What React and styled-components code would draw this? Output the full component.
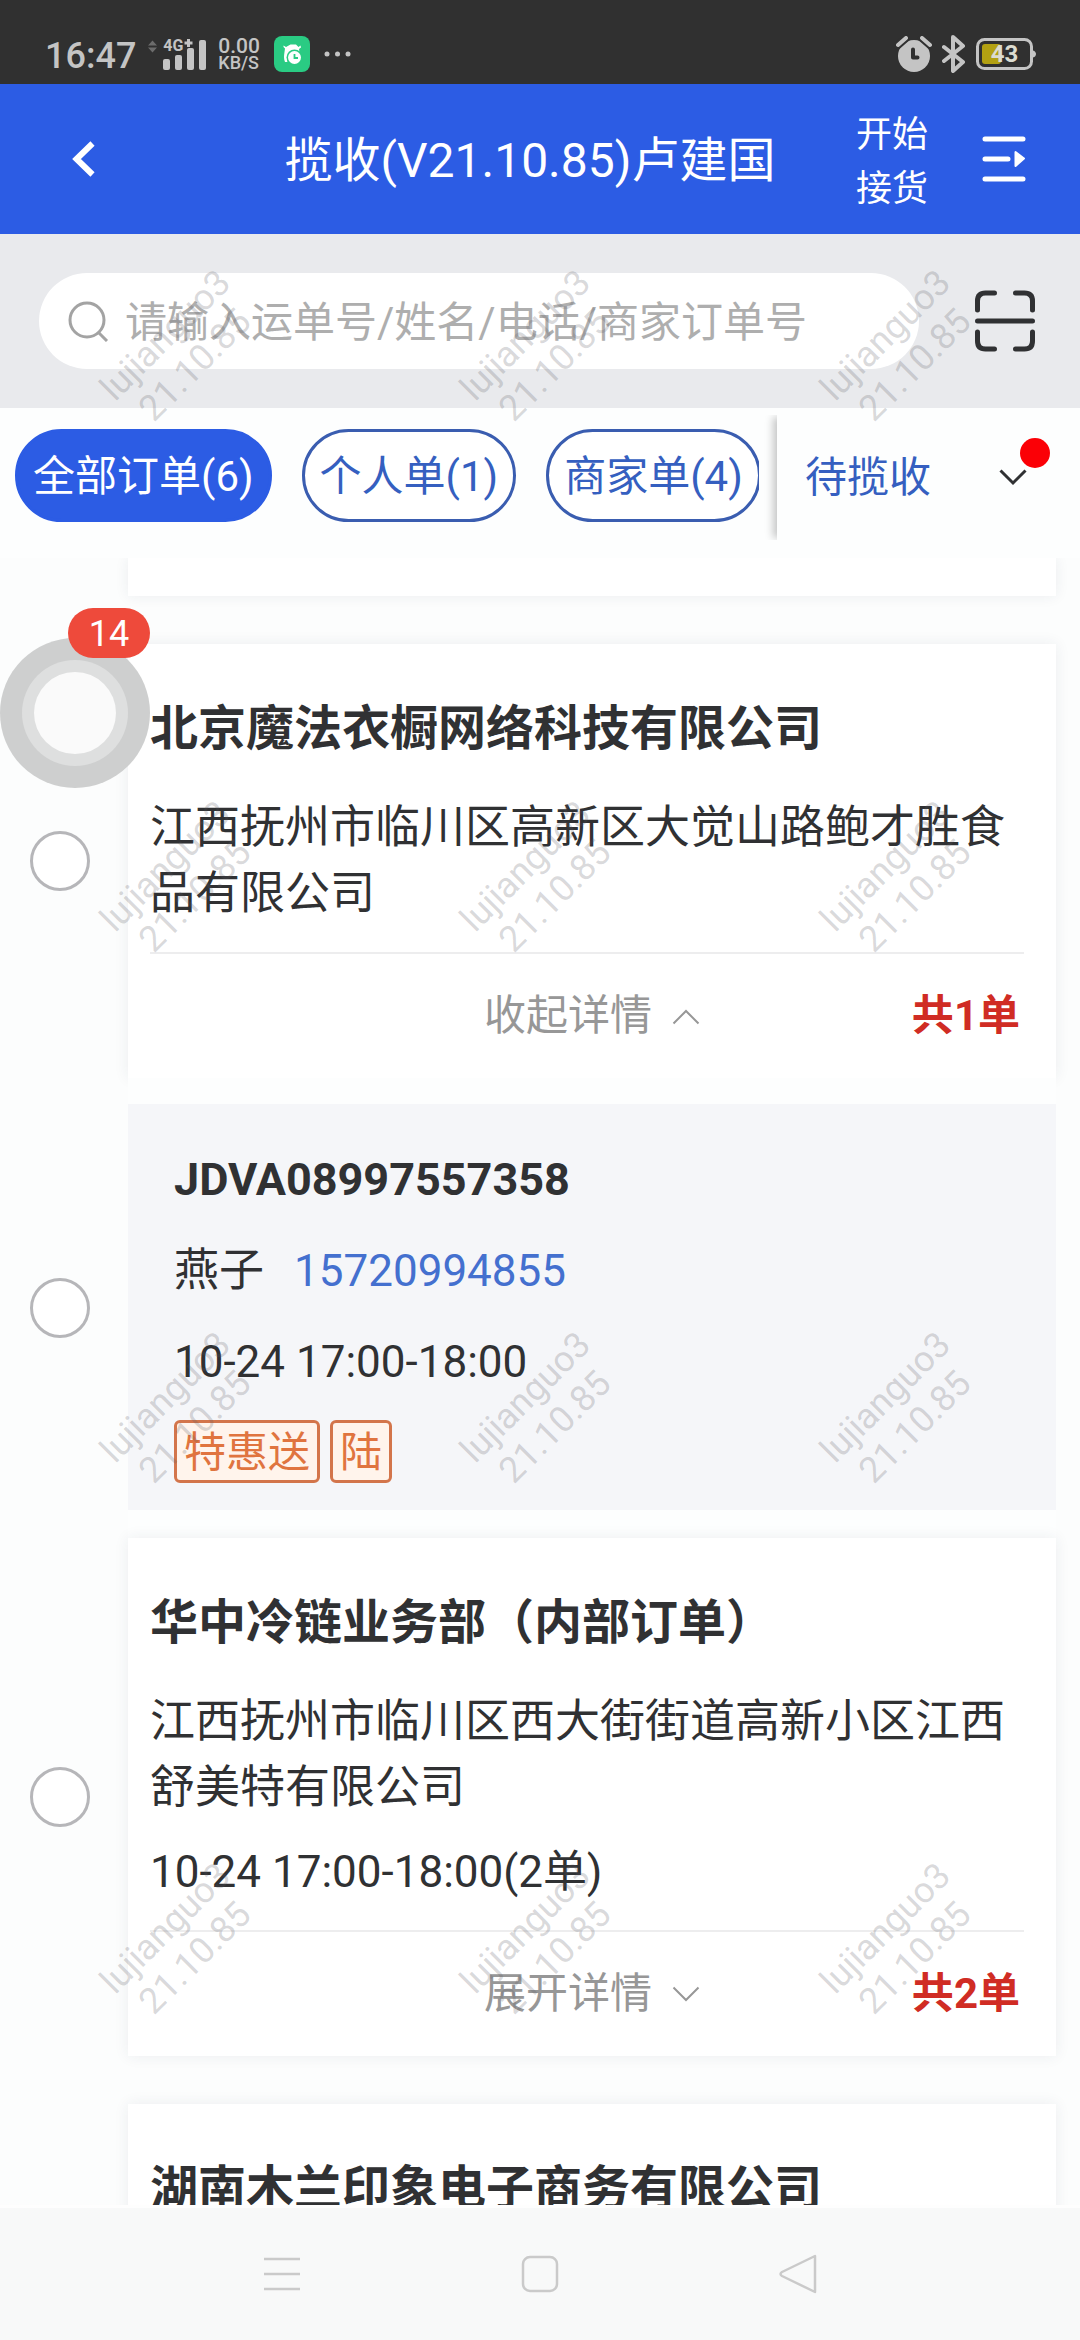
import React, { useState } from "react";
import styled, { createGlobalStyle } from "styled-components";

const blue = "#2c5ce4";
const ink = "#303133";

const GlobalStyle = createGlobalStyle`
  * { box-sizing: border-box; }
  body {
    margin: 0;
    background: #fcfdfd;
    color: ${ink};
    font-family: Roboto, "Noto Sans CJK SC", sans-serif;
  }
  button, input, select { font: inherit; color: inherit; }
  button { margin: 0; padding: 0; border: 0; background: none; cursor: pointer; }
  h1, h2, h3, p { margin: 0; }
  svg { display: block; flex: none; }
`;

const Phone = styled.div`
  display: flex;
  flex-direction: column;
  height: 100vh;
  overflow: hidden;
`;

/* ---------- system status bar ---------- */

const StatusBar = styled.div`
  display: flex;
  justify-content: space-between;
  align-items: center;
  flex: none;
  height: 84px;
  padding: 24px 44px 0 45px;
  background: #303030;
  color: #c4c4c4;
`;

const StatusGroup = styled.div`
  display: flex;
  align-items: center;
  gap: ${(p) => p.$gap}px;
`;

const Clock = styled.span`
  padding-top: 4px;
  font-size: 36px;
  line-height: 40px;
  font-weight: 500;
`;

const Signal = styled.span`
  position: relative;
  display: block;
`;

const NetworkType = styled.span`
  position: absolute;
  top: 2px;
  left: 16px;
  font-size: 16px;
  line-height: 16px;
  font-weight: 700;
`;

const Speed = styled.span`
  display: flex;
  flex-direction: column;
  font-size: 18px;
  line-height: 16px;
  font-weight: 500;
`;

const SpeedValue = styled.span`
  font-size: 21px;
  line-height: 18px;
`;

const Battery = styled.span`
  position: relative;
  display: flex;
  align-items: center;
  width: 60px;
  height: 32px;
`;

const BatteryText = styled.span`
  position: absolute;
  inset: 0 3px 0 0;
  text-align: center;
  font-size: 24px;
  line-height: 32px;
  font-weight: 700;
  color: #dcdcd0;
`;

/* ---------- app frame ---------- */

const AppArea = styled.div`
  position: relative;
  display: flex;
  flex-direction: column;
  flex: 1;
  min-height: 0;
`;

const Header = styled.header`
  display: grid;
  grid-template-columns: 204px 1fr 72px 98px;
  align-items: center;
  flex: none;
  height: 150px;
  padding-right: 54px;
  background: ${blue};
  color: #fff;
`;

const BackButton = styled.button`
  justify-self: start;
  padding: 12px 72px;
`;

const Title = styled.h1`
  padding-top: 4px;
  text-align: center;
  font-size: 48px;
  line-height: 66px;
  font-weight: 400;
  white-space: nowrap;
`;

const StartButton = styled.button`
  padding-top: 6px;
  font-size: 36px;
  line-height: 54px;
  white-space: nowrap;
`;

const MenuButton = styled.button`
  justify-self: end;
`;

const SearchBar = styled.div`
  display: flex;
  align-items: center;
  flex: none;
  gap: 55px;
  height: 174px;
  padding: 0 44px 0 39px;
  background: #e9eaed;
`;

const SearchField = styled.label`
  display: flex;
  align-items: center;
  gap: 16px;
  flex: 1;
  min-width: 0;
  height: 96px;
  padding: 0 40px 0 29px;
  border-radius: 48px;
  background: #fff;
`;

const SearchInput = styled.input`
  flex: 1;
  min-width: 0;
  height: 66px;
  padding: 2px 0 0;
  border: 0;
  outline: 0;
  background: transparent;
  font-size: 42px;
  &::placeholder { color: #aeaeae; opacity: 1; }
`;

/* ---------- filter tabs ---------- */

const FilterBar = styled.div`
  display: flex;
  flex: none;
  gap: 18px;
  height: 150px;
  background: #fdfefe;
`;

const TabScroller = styled.div`
  display: flex;
  align-items: flex-start;
  gap: 30px;
  flex: 1;
  min-width: 0;
  padding: 21px 0 0 15px;
  overflow: hidden;
`;

const Pill = styled.button`
  flex: none;
  height: 93px;
  padding: 3px 15px 0;
  border: 3px solid ${(p) => (p.$active ? blue : "#3a5db0")};
  border-radius: 48px;
  background: ${(p) => (p.$active ? blue : "#fff")};
  color: ${(p) => (p.$active ? "#fff" : "#355fc0")};
  font-size: 42px;
  line-height: 66px;
  white-space: nowrap;
`;

const StatusFilter = styled.label`
  position: relative;
  display: flex;
  align-items: center;
  justify-content: space-between;
  width: 303px;
  margin: 7px 0 18px;
  padding: 0 53px 0 28px;
  background: #fdfefe;
  box-shadow: -6px 0 8px -2px rgba(0, 0, 0, 0.22);
  clip-path: inset(0 0 0 -16px);
`;

const StatusSelect = styled.select`
  appearance: none;
  width: 132px;
  padding: 0;
  border: 0;
  outline: 0;
  background: transparent;
  color: #355fc0;
  font-size: 42px;
  line-height: 66px;
`;

const RedDot = styled.span`
  position: absolute;
  top: 23px;
  right: 30px;
  width: 30px;
  height: 30px;
  border-radius: 50%;
  background: #fb0006;
`;

/* ---------- order list ---------- */

const List = styled.main`
  flex: 1;
  min-height: 0;
  overflow: hidden;
  border-bottom: 3px solid #fefefe;
`;

const Row = styled.div`
  display: grid;
  grid-template-columns: 120px 1fr;
  gap: 8px;
  align-items: center;
  padding-right: 24px;
  margin-bottom: ${(p) => (p.$spaced ? 48 : 0)}px;
`;

const Radio = styled.input`
  appearance: none;
  justify-self: center;
  width: 60px;
  height: 60px;
  margin: 0;
  border: 3px solid #b6b6b9;
  border-radius: 50%;
  background: #fff;
  &:checked { border: 18px solid ${blue}; }
`;

const Card = styled.article`
  position: relative;
  grid-column: 2;
  min-width: 0;
  background: #fff;
  box-shadow: 0 0 14px rgba(40, 50, 80, 0.08);
`;

const CardTail = styled(Card)`
  height: 38px;
`;

const CardBody = styled.div`
  margin: 0 32px 0 22px;
  padding: 52px 0 25px;
  border-bottom: 2px solid #ededee;
`;

const Company = styled.h2`
  margin-bottom: 33px;
  font-size: 48px;
  line-height: 66px;
  font-weight: 700;
`;

const BodyText = styled.p`
  font-size: 45px;
  line-height: 66px;
`;

const TimeText = styled.p`
  font-size: 44px;
  line-height: 66px;
`;

const PickupTime = styled(TimeText)`
  margin-top: 18px;
`;

const CardFooter = styled.div`
  display: grid;
  grid-template-columns: 1fr auto 1fr;
  align-items: center;
  height: 124px;
  padding: 0 36px;
`;

const ToggleButton = styled.button`
  grid-column: 2;
  display: flex;
  align-items: center;
  gap: 20px;
  color: #979797;
  font-size: 42px;
  line-height: 66px;
`;

const Count = styled.span`
  justify-self: end;
  color: #d02c24;
  font-size: 42px;
  line-height: 66px;
  font-weight: 700;
`;

const DetailSlot = styled.div`
  position: relative;
  padding: 26px 0 28px;
  background: #fdfefe;
`;

const Detail = styled.article`
  display: flex;
  flex-direction: column;
  align-items: flex-start;
  gap: 25px;
  padding: 43px 46px 27px;
  background: #f5f6f9;
`;

const Waybill = styled.h3`
  font-size: 45px;
  line-height: 66px;
  font-weight: 700;
`;

const Contact = styled(BodyText)`
  display: flex;
  gap: 30px;
`;

const PhoneLink = styled.a`
  color: #4470cf;
  font-size: 44px;
  text-decoration: none;
`;

const Tags = styled.div`
  display: flex;
  gap: 10px;
`;

const Tag = styled.span`
  padding: 2px 7px 0;
  border: 3px solid #d3754b;
  border-radius: 6px;
  background: #fff4ec;
  color: #e0743f;
  font-size: 42px;
  line-height: 55px;
`;

/* ---------- overlays ---------- */

const FloatingBall = styled.button`
  position: absolute;
  top: 554px;
  left: 0;
  display: grid;
  place-items: center;
  width: 150px;
  height: 150px;
  border-radius: 50%;
  background: rgba(202, 203, 203, 0.92);
`;

const BallRing = styled.span`
  display: grid;
  place-items: center;
  width: 106px;
  height: 106px;
  border-radius: 50%;
  background: #dedfdf;
`;

const BallCore = styled.span`
  width: 82px;
  height: 82px;
  border-radius: 50%;
  background: #fafafa;
`;

const Badge = styled.span`
  position: absolute;
  top: -30px;
  left: 68px;
  width: 82px;
  padding-top: 2px;
  border-radius: 25px;
  background: #ee4a3b;
  color: #fff;
  font-size: 36px;
  line-height: 48px;
  text-align: center;
`;

const Watermarks = styled.div`
  position: absolute;
  inset: 0;
  display: grid;
  grid-template-columns: repeat(3, 1fr);
  grid-template-rows: repeat(4, 1fr);
  place-items: center;
  overflow: hidden;
  pointer-events: none;
`;

const Mark = styled.div`
  transform: rotate(-45deg);
  color: rgba(90, 90, 98, 0.23);
  font-size: 36px;
  line-height: 42px;
  text-align: center;
`;

/* ---------- system navigation ---------- */

const NavBar = styled.nav`
  display: grid;
  grid-template-columns: repeat(3, 258px);
  justify-content: center;
  justify-items: center;
  flex: none;
  height: 132px;
  background: #f8f9f9;
`;

/* ---------- icons ---------- */

const SignalIcon = () => (
  <svg width="60" height="36" viewBox="0 0 60 36" fill="#c4c4c4">
    <path d="M1 9.500l4.500-5 4.500 5zM1 11.500l4.500 5 4.500-5z" fill="#6c6c6c" />
    <rect x="16" y="23" width="7" height="11" rx="2" />
    <rect x="28" y="19" width="7" height="15" rx="2" />
    <rect x="40" y="12" width="7" height="22" rx="2" />
    <rect x="52" y="4" width="7" height="30" rx="2" />
    <path d="M41.500 3v8M37.500 7h8" stroke="#c4c4c4" strokeWidth="3" />
  </svg>
);

const GreenAppIcon = () => (
  <svg width="36" height="36" viewBox="0 0 36 36">
    <rect width="36" height="36" rx="8" fill="#2acb83" />
    <path
      d="M9.500 9.500L12 11l4.500-2.500h5.500L24.500 11l2-1.500.5 2-2 1.500.5 3.500h-8c-2.500 2-4 5-4 9.500h-2.500c-1.500-3-1-7-.5-10l.5-3.500-1.500-1.500z"
      fill="#fff"
    />
    <circle cx="20.500" cy="21.500" r="8" fill="#2acb83" />
    <circle cx="20.500" cy="21.500" r="6.500" fill="#fff" />
    <path d="M20.500 18v4h3.500" fill="none" stroke="#2acb83" strokeWidth="1.800" />
  </svg>
);

const DotsIcon = () => (
  <svg width="27" height="6" viewBox="0 0 27 6" fill="#c4c4c4">
    <circle cx="3" cy="3" r="2.500" />
    <circle cx="13.500" cy="3" r="2.500" />
    <circle cx="24" cy="3" r="2.500" />
  </svg>
);

const AlarmIcon = () => (
  <svg width="36" height="36" viewBox="0 0 36 36" fill="none" strokeLinecap="round">
    <circle cx="18" cy="20" r="16" fill="#c4c4c4" />
    <path d="M2 9l8-7M34 9l-8-7" stroke="#303030" strokeWidth="8" />
    <path d="M2 9l8-7M34 9l-8-7" stroke="#c4c4c4" strokeWidth="4" />
    <path d="M17 13.500v8h4.500" stroke="#303030" strokeWidth="4" strokeLinejoin="round" />
  </svg>
);

const BluetoothIcon = () => (
  <svg width="24" height="38" viewBox="0 0 24 38" fill="none" stroke="#c4c4c4" strokeWidth="4" strokeLinejoin="round" strokeLinecap="round">
    <path d="M2 12l19 15-10 9V2l10 9L2 26" />
  </svg>
);

const BatteryIcon = () => (
  <svg width="60" height="32" viewBox="0 0 60 32">
    <rect x="1.500" y="1.500" width="54" height="29" rx="7" fill="none" stroke="#c4c4c4" strokeWidth="3" />
    <path d="M57 12.500c4 1 4 6 0 7z" fill="#c4c4c4" />
    <rect x="6" y="6" width="19" height="20" rx="3" fill="#b3a112" />
  </svg>
);

const BackIcon = () => (
  <svg width="23" height="36" viewBox="0 0 23 36" fill="none" stroke="#fff" strokeWidth="6">
    <path d="M20.500 2.500L4.500 18l16 15.500" />
  </svg>
);

const MenuIcon = () => (
  <svg width="44" height="48" viewBox="0 0 44 48" fill="none" stroke="#fff" strokeWidth="5" strokeLinecap="round">
    <path d="M3 4h38M3 24h23M3 44h38" />
    <path d="M33.500 17v14l8.500-7.500z" fill="#fff" strokeWidth="2" strokeLinejoin="round" />
  </svg>
);

const SearchIcon = () => (
  <svg width="41" height="42" viewBox="0 0 41 42" fill="none" stroke="#a3a3a3" strokeWidth="3">
    <circle cx="19" cy="20" r="17" />
    <path d="M30 32l9 9" />
  </svg>
);

const ScanIcon = () => (
  <svg width="62" height="62" viewBox="0 0 62 62" fill="none" stroke="#303133" strokeWidth="5" strokeLinecap="round">
    <path d="M3.500 20v-9q0-8 8-8h9M41.500 3h9q8 0 8 8v9M58.500 42v9q0 8-8 8h-9M20.500 59h-9q-8 0-8-8v-9M3.500 31h55" />
  </svg>
);

const Chevron = ({ up, color = "#979797", weight = 2 }) => (
  <svg width="28" height="17" viewBox="0 0 28 17" fill="none" stroke={color} strokeWidth={weight}>
    <path d={up ? "M1.500 15.500L14 3l12.500 12.500" : "M1.500 1.500L14 14 26.500 1.500"} />
  </svg>
);

const RecentIcon = () => (
  <svg width="36" height="38" viewBox="0 0 36 38" stroke="#cacaca" strokeWidth="2.500">
    <path d="M0 4h36M0 19h36M0 34h36" />
  </svg>
);

const HomeIcon = () => (
  <svg width="38" height="38" viewBox="0 0 38 38" fill="none" stroke="#cacaca" strokeWidth="2.500">
    <rect x="2" y="2" width="34" height="34" rx="7" />
  </svg>
);

const TriangleIcon = () => (
  <svg width="38" height="40" viewBox="0 0 38 40" fill="none" stroke="#cacaca" strokeWidth="2.500" strokeLinejoin="round">
    <path d="M36 2v36L3 22q-3-2 0-4z" />
  </svg>
);

/* ---------- composed parts ---------- */

function OrderCard({ company, address, time, open, count, onToggle }) {
  return (
    <Row $spaced={!open}>
      <Radio type="checkbox" aria-label={company} />
      <Card>
        <CardBody>
          <Company>{company}</Company>
          <BodyText>{address}</BodyText>
          {time && <PickupTime>{time}</PickupTime>}
        </CardBody>
        <CardFooter>
          <ToggleButton type="button" onClick={onToggle}>
            {open ? "收起详情" : "展开详情"}
            <Chevron up={open} />
          </ToggleButton>
          <Count>共{count}单</Count>
        </CardFooter>
      </Card>
    </Row>
  );
}

function WaybillDetail({ code, name, phone, time, tags }) {
  return (
    <Row>
      <Radio type="checkbox" aria-label={code} />
      <DetailSlot>
        <Detail>
          <Waybill>{code}</Waybill>
          <Contact>
            {name}
            <PhoneLink href={`tel:${phone}`}>{phone}</PhoneLink>
          </Contact>
          <TimeText>{time}</TimeText>
          <Tags>
            {tags.map((t) => (
              <Tag key={t}>{t}</Tag>
            ))}
          </Tags>
        </Detail>
      </DetailSlot>
    </Row>
  );
}

const tabs = ["全部订单(6)", "个人单(1)", "商家单(4)"];

export default function App() {
  const [tab, setTab] = useState(0);
  const [open, setOpen] = useState(true);

  return (
    <Phone lang="zh-CN">
      <GlobalStyle />
      <StatusBar>
        <StatusGroup $gap={11}>
          <Clock>16:47</Clock>
          <Signal>
            <SignalIcon />
            <NetworkType>4G</NetworkType>
          </Signal>
          <StatusGroup $gap={14}>
            <Speed>
              <SpeedValue>0.00</SpeedValue>
              KB/S
            </Speed>
            <GreenAppIcon />
            <DotsIcon />
          </StatusGroup>
        </StatusGroup>
        <StatusGroup $gap={10}>
          <AlarmIcon />
          <BluetoothIcon />
          <Battery>
            <BatteryIcon />
            <BatteryText>43</BatteryText>
          </Battery>
        </StatusGroup>
      </StatusBar>

      <AppArea>
        <Header>
          <BackButton type="button" aria-label="返回">
            <BackIcon />
          </BackButton>
          <Title>揽收(V21.10.85)卢建国</Title>
          <StartButton type="button">
            开始
            <br />
            接货
          </StartButton>
          <MenuButton type="button" aria-label="菜单">
            <MenuIcon />
          </MenuButton>
        </Header>

        <SearchBar>
          <SearchField>
            <SearchIcon />
            <SearchInput type="text" aria-label="搜索" placeholder="请输入运单号/姓名/电话/商家订单号" />
          </SearchField>
          <button type="button" aria-label="扫码">
            <ScanIcon />
          </button>
        </SearchBar>

        <FilterBar>
          <TabScroller>
            {tabs.map((t, i) => (
              <Pill key={t} type="button" $active={i === tab} onClick={() => setTab(i)}>
                {t}
              </Pill>
            ))}
          </TabScroller>
          <StatusFilter>
            <StatusSelect aria-label="订单状态" defaultValue="待揽收">
              <option>待揽收</option>
            </StatusSelect>
            <Chevron color="#303133" weight={3} />
            <RedDot />
          </StatusFilter>
        </FilterBar>

        <List>
          <Row $spaced>
            <CardTail />
          </Row>
          <OrderCard
            company="北京魔法衣橱网络科技有限公司"
            address="江西抚州市临川区高新区大觉山路鲍才胜食品有限公司"
            open={open}
            count={1}
            onToggle={() => setOpen(!open)}
          />
          {open && (
            <WaybillDetail
              code="JDVA08997557358"
              name="燕子"
              phone="15720994855"
              time="10-24 17:00-18:00"
              tags={["特惠送", "陆"]}
            />
          )}
          <OrderCard
            company="华中冷链业务部（内部订单）"
            address="江西抚州市临川区西大街街道高新小区江西舒美特有限公司"
            time="10-24 17:00-18:00(2单)"
            count={2}
          />
          <Row>
            <Card>
              <CardBody>
                <Company>湖南木兰印象电子商务有限公司</Company>
              </CardBody>
            </Card>
          </Row>
        </List>

        <Watermarks aria-hidden="true">
          {Array.from({ length: 12 }, (_, i) => (
            <Mark key={i}>
              lujianguo3
              <br />
              21.10.85
            </Mark>
          ))}
        </Watermarks>

        <FloatingBall type="button" aria-label="悬浮球">
          <BallRing>
            <BallCore />
          </BallRing>
          <Badge>14</Badge>
        </FloatingBall>
      </AppArea>

      <NavBar>
        <button type="button" aria-label="最近任务">
          <RecentIcon />
        </button>
        <button type="button" aria-label="主屏幕">
          <HomeIcon />
        </button>
        <button type="button" aria-label="返回上一页">
          <TriangleIcon />
        </button>
      </NavBar>
    </Phone>
  );
}
